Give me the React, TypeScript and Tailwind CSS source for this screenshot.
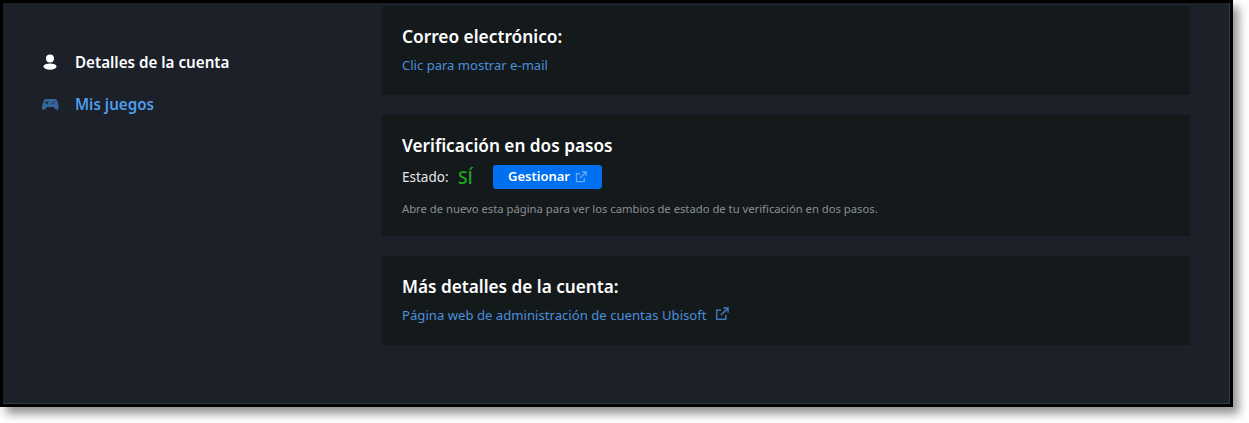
import React from "react";

function ExtIcon({ className }: { className: string }) {
  return (
    <svg viewBox="0 0 14 14" className={className} fill="none" stroke="currentColor" strokeWidth="1.5">
      <path d="M10.8 8v4.3H1.7V3.2H6" />
      <path d="M5.800 8.200 12.600 1.400M8.200 1h4.800v4.800" />
    </svg>
  );
}

export default function App() {
  return (
    <div className="w-[1249px] h-[423px] bg-white overflow-hidden font-['Noto_Sans',sans-serif]">
      <div className="w-[1233px] h-[407px] border-[3px] border-black bg-black shadow-[6px_7px_9px_rgba(0,0,0,0.42)]">
        <div className="w-full h-full flex bg-[#1b2029] border-r border-b border-[#333b45]">
          <nav className="w-[379px] shrink-0 pt-[48px] pl-[37px] flex flex-col gap-[20px]">
            <div className="flex items-center h-[22px]">
              <span className="w-[35px] pl-[3px] flex">
                <svg viewBox="0 0 14 16" className="w-[14px] h-[16px] text-white" fill="currentColor">
                  <circle cx="7" cy="4.400" r="4" />
                  <ellipse cx="7" cy="12.600" rx="6.500" ry="3.200" />
                </svg>
              </span>
              <span className="text-[15.2px] leading-[22px] font-semibold text-white">Detalles de la cuenta</span>
            </div>
            <div className="flex items-center h-[22px]">
              <span className="w-[35px] pl-[2px] flex">
                <svg viewBox="0 0 18 14" className="w-[17px] h-[13px] text-[#35659b]" fill="currentColor">
                  <path fillRule="evenodd" d="M4.500 1h9c2 0 2.800 1.400 3.300 3.300.5 2 1.200 4.600.9 6.700-.3 1.900-2.300 2.200-3.500.8L12.500 9.800h-7L3.300 11.800C2.100 13.200.1 12.900-.2 11 -.5 8.900.7 6.300 1.200 4.300 1.700 2.400 2.500 1 4.500 1ZM4.600 3.300v1.200H3.400v1.100h1.200v1.200h1.100V5.600h1.200V4.500H5.700V3.300ZM13 3.500a.8.8 0 1 0 0 1.600.8.8 0 0 0 0-1.600Zm-2 2a.8.8 0 1 0 0 1.600.8.8 0 0 0 0-1.600Z" />
                </svg>
              </span>
              <span className="text-[15.2px] leading-[22px] font-semibold text-[#4f9ceb]">Mis juegos</span>
            </div>
          </nav>
          <main className="w-[808px] shrink-0 pt-[3px] flex flex-col gap-[20px]">
            <section className="h-[89px] bg-[#14191c] pl-[20px] pt-[18px]">
              <h2 className="text-[17.3px] leading-[26px] font-semibold text-white">Correo electrónico:</h2>
              <p className="mt-[5px] text-[13.05px] leading-[20px] text-[#4a8fd9]">Clic para mostrar e-mail</p>
            </section>
            <section className="h-[121px] bg-[#14191c] pl-[20px] pt-[18px]">
              <h2 className="text-[17.2px] leading-[26px] font-semibold text-white">Verificación en dos pasos</h2>
              <div className="mt-[6px] flex items-center h-[24px]">
                <span className="text-[13.5px] text-[#e6e6e6] w-[56px]">Estado:</span>
                <span className="text-[17.5px] font-semibold text-[#1da51d] w-[35px] font-['Open_Sans',sans-serif]">SÍ</span>
                <span className="h-[24px] w-[109px] rounded-[3px] bg-[#0070f0] flex items-center justify-center gap-[5px] text-[13px] font-semibold text-white">
                  Gestionar
                  <ExtIcon className="w-[12px] h-[12px] text-[#6aaaf5]" />
                </span>
              </div>
              <p className="mt-[12px] text-[11.25px] leading-[16px] text-[#8b8f92]">Abre de nuevo esta página para ver los cambios de estado de tu verificación en dos pasos.</p>
            </section>
            <section className="h-[89px] bg-[#14191c] pl-[20px] pt-[18px]">
              <h2 className="text-[17.2px] leading-[26px] font-semibold text-white">Más detalles de la cuenta:</h2>
              <p className="mt-[5px] flex items-center text-[13.15px] leading-[20px] text-[#4a8fd9]">
                Página web de administración de cuentas Ubisoft
                <ExtIcon className="ml-[8px] w-[14px] h-[14px] -mt-[2px] text-[#3f76b3]" />
              </p>
            </section>
          </main>
        </div>
      </div>
    </div>
  );
}
